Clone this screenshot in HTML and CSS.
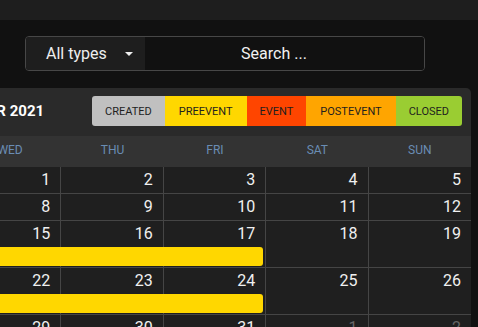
FILE: index.html
```html
<!DOCTYPE html>
<html lang="en">
<head>
  <meta charset="UTF-8" />
  <meta name="viewport" content="width=device-width, initial-scale=1.0"/>
  <title>Event Calendar</title>
  <link rel="stylesheet" href="styles.css">
</head>

<body>
  <div class="topbar"></div>

  <div class="filter-row">
    <div class="filter">
      <div class="type-select">
        <span>All types</span>
        <svg class="caret" width="8" height="4" viewBox="0 0 8 4"><path d="M0 0 L8 0 L4 4 Z" fill="#eee"/></svg>
      </div>
      <input class="search" placeholder="Search ..." />
    </div>
  </div>

  <div class="calendar">
    <div class="cal-head">
      <div class="month">DECEMBER 2021</div>
      <div class="legend">
        <span class="created">CREATED</span>
        <span class="preevent">PREEVENT</span>
        <span class="event">EVENT</span>
        <span class="postevent">POSTEVENT</span>
        <span class="closed">CLOSED</span>
      </div>
    </div>

    <div class="day-names">
      <div>MON</div><div>TUE</div><div>WED</div><div>THU</div><div>FRI</div><div>SAT</div><div>SUN</div>
    </div>

    <div class="week">
      <div class="day other">29</div><div class="day other">30</div><div class="day">1</div><div class="day">2</div><div class="day">3</div><div class="day">4</div><div class="day">5</div>
    </div>
    <div class="week">
      <div class="day">6</div><div class="day">7</div><div class="day">8</div><div class="day">9</div><div class="day">10</div><div class="day">11</div><div class="day">12</div>
    </div>
    <div class="week">
      <div class="day">13</div><div class="day">14</div><div class="day">15</div><div class="day">16</div><div class="day">17</div><div class="day">18</div><div class="day">19</div>
      <div class="bar preevent"></div>
    </div>
    <div class="week">
      <div class="day">20</div><div class="day">21</div><div class="day">22</div><div class="day">23</div><div class="day">24</div><div class="day">25</div><div class="day">26</div>
      <div class="bar preevent"></div>
    </div>
    <div class="week">
      <div class="day">27</div><div class="day">28</div><div class="day">29</div><div class="day">30</div><div class="day">31</div><div class="day other">1</div><div class="day other">2</div>
    </div>
  </div>
</body>
</html>
```

FILE: styles.css
```css
* {
  box-sizing: border-box;
}

body {
  margin: 0;
  background-color: #111111;
  font-family: Roboto, 'Liberation Sans', sans-serif;
  color: #eeeeee;
  overflow: hidden;
  height: 100vh;
}

.topbar {
  height: 20px;
  background-color: #1e1e1e;
}

.filter-row {
  padding: 16px 0 0 25px;
}

.filter {
  display: flex;
  width: 400px;
  height: 35px;
  border: solid 1px #474747;
  border-radius: 4px;
  overflow: hidden;
}

.type-select {
  width: 119px;
  display: flex;
  align-items: center;
  padding-left: 20px;
  background-color: #1e1e1e;
  font-size: 16px;
}

.caret {
  margin-left: 18px;
}

.search {
  flex: 1;
  border: none;
  outline: none;
  background-color: #111111;
  color: #ffffff;
  font-family: inherit;
  font-size: 16px;
  text-align: center;
  padding: 0 21px 0 0;
}

.search::placeholder {
  color: #f2f2f2;
  opacity: 1;
}

.calendar {
  margin: 17px 0 0 -246px;
  width: 717px;
  background-color: #2a2a2a;
  border-top-right-radius: 5px;
}

.cal-head {
  height: 48px;
  display: flex;
  justify-content: flex-end;
  align-items: center;
  gap: 48px;
  padding: 0 9px 2px 0;
}

.month {
  font-size: 15px;
  font-weight: 700;
  color: #ffffff;
}

.legend {
  display: flex;
  height: 30px;
  border-radius: 3px;
  overflow: hidden;
}

.legend span {
  display: flex;
  align-items: center;
  padding: 0 13px;
  font-size: 11px;
  color: #1e1e1e;
}

.legend .preevent,
.legend .postevent {
  padding: 0 14px;
}

.created {
  background-color: #c0c0c0;
}

.preevent {
  background-color: #ffd700;
}

.event {
  background-color: #ff4500;
}

.postevent {
  background-color: #ffa500;
}

.closed {
  background-color: #9acd32;
}

.day-names {
  display: grid;
  grid-template-columns: repeat(7, 1fr);
  height: 31px;
  background-color: #333333;
}

.day-names div {
  text-align: center;
  font-size: 12px;
  line-height: 28px;
  color: #6a8db3;
}

.week {
  display: grid;
  grid-template-columns: repeat(7, 1fr);
  grid-template-rows: 26px auto;
  background-color: #1f1f1f;
  border-bottom: solid 1px #454545;
}

.day {
  grid-row: 1 / 3;
  border-right: solid 1px #454545;
  text-align: right;
  padding-right: 10px;
  font-size: 16px;
  line-height: 26px;
  color: #f0f0f0;
}

.day:nth-child(1) { grid-column: 1; }
.day:nth-child(2) { grid-column: 2; }
.day:nth-child(3) { grid-column: 3; }
.day:nth-child(4) { grid-column: 4; }
.day:nth-child(5) { grid-column: 5; }
.day:nth-child(6) { grid-column: 6; }

.day:nth-child(7) {
  grid-column: 7;
  border-right: none;
}

.day.other {
  color: #666666;
}

.bar {
  grid-row: 2;
  grid-column: 1 / 6;
  height: 19px;
  margin: 0 3px 1px 2px;
  border-radius: 3px;
}
```
